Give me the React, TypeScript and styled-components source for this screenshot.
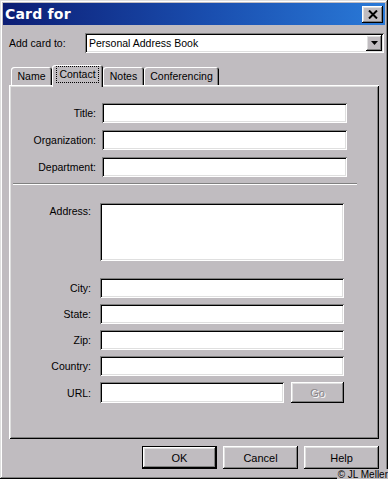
import styled, { createGlobalStyle, css } from 'styled-components';

const FACE = '#c0bcc0';

const raised = css`
  box-shadow:
    inset -1px -1px #000,
    inset 1px 1px #fff,
    inset -2px -2px #808080,
    inset 2px 2px #dfdfdf;
`;

const sunken = css`
  box-shadow:
    inset 1px 1px #808080,
    inset -1px -1px #fff,
    inset 2px 2px #000,
    inset -2px -2px #dfdfdf;
`;

const GlobalStyle = createGlobalStyle`
  html, body {
    margin: 0;
    padding: 0;
    background: ${FACE};
  }
`;

const Window = styled.div`
  position: relative;
  width: 388px;
  height: 479px;
  box-sizing: border-box;
  padding: 3px;
  background: ${FACE};
  box-shadow:
    inset -1px -1px #000,
    inset 1px 1px #dfdfdf,
    inset -2px -2px #808080,
    inset 2px 2px #fff;
  display: flex;
  flex-direction: column;
  font-family: 'Liberation Sans', Arial, sans-serif;
  font-size: 10.5px;
  color: #000;
`;

const TitleBar = styled.div`
  height: 22px;
  display: flex;
  align-items: center;
  justify-content: space-between;
  padding: 0 2px;
  background: linear-gradient(90deg, #0c1d74 0%, #1a4fb0 55%, #2a7ad8 100%);
`;

const TitleText = styled.span`
  font-family: 'DejaVu Sans', Verdana, sans-serif;
  font-weight: bold;
  font-size: 14px;
  color: #fff;
  letter-spacing: 0.2px;
`;

const CloseButton = styled.div`
  width: 21px;
  height: 17px;
  background: ${FACE};
  ${raised};
  display: flex;
  align-items: center;
  justify-content: center;
`;

const Content = styled.div`
  flex: 1;
  display: flex;
  flex-direction: column;
  padding: 0 6px;
`;

const AddRow = styled.div`
  margin-top: 8px;
  height: 20px;
  display: flex;
  align-items: center;
`;

const AddLabel = styled.span`
  width: 76px;
`;

const Select = styled.div`
  flex: 1;
  margin-right: -5px;
  height: 20px;
  box-sizing: border-box;
  padding: 2px;
  background: #fff;
  ${sunken};
  display: flex;
  align-items: center;
`;

const SelectValue = styled.span`
  flex: 1;
  padding-left: 2px;
`;

const ArrowButton = styled.div`
  width: 16px;
  height: 16px;
  background: ${FACE};
  ${raised};
  display: flex;
  align-items: center;
  justify-content: center;
`;

const TabStrip = styled.div`
  margin-top: 12px;
  height: 20px;
  padding-left: 2px;
  display: flex;
  align-items: flex-end;
`;

const Tab = styled.div<{ $width: number; $active?: boolean }>`
  position: relative;
  width: ${(p) => p.$width}px;
  height: ${(p) => (p.$active ? 22 : 18)}px;
  margin-bottom: ${(p) => (p.$active ? -2 : 0)}px;
  z-index: ${(p) => (p.$active ? 1 : 0)};
  box-sizing: border-box;
  padding-top: ${(p) => (p.$active ? 2 : 3)}px;
  background: ${FACE};
  border-radius: 3px 3px 0 0;
  box-shadow:
    inset 1px 1px #fff,
    inset -1px 0 #000,
    inset -2px 0 #808080;
  text-align: center;
  line-height: 13px;
`;

const FocusText = styled.span`
  display: inline-block;
  outline: 1px dotted #000;
  padding: 1px 2px;
`;

const Panel = styled.div`
  width: 370px;
  height: 354px;
  box-sizing: border-box;
  padding: 18px 0 0 2px;
  background: ${FACE};
  box-shadow:
    inset 1px 1px #fff,
    inset -1px -1px #000,
    inset 2px 2px #dfdfdf,
    inset -2px -2px #808080;
  display: flex;
  flex-direction: column;
`;

const Group = styled.div<{ $gap: number; $top?: number }>`
  display: flex;
  flex-direction: column;
  gap: ${(p) => p.$gap}px;
  margin-top: ${(p) => p.$top ?? 0}px;
`;

const Row = styled.div<{ $gap: number; $top?: boolean; $after?: number }>`
  display: flex;
  align-items: ${(p) => (p.$top ? 'flex-start' : 'center')};
  gap: ${(p) => p.$gap}px;
  margin-bottom: ${(p) => p.$after ?? 0}px;
`;

const Label = styled.span<{ $width: number; $top?: boolean }>`
  width: ${(p) => p.$width}px;
  text-align: right;
  padding-top: ${(p) => (p.$top ? 2 : 0)}px;
`;

const Field = styled.div<{ $width: number; $height?: number }>`
  width: ${(p) => p.$width}px;
  height: ${(p) => p.$height ?? 20}px;
  background: #fff;
  ${sunken};
`;

const Separator = styled.div`
  margin: 6px 0 0 2px;
  width: 344px;
  height: 0;
  border-top: 1px solid #808080;
  border-bottom: 1px solid #fff;
`;

const Button = styled.div<{ $width: number; $height: number; $default?: boolean; $disabled?: boolean }>`
  width: ${(p) => p.$width}px;
  height: ${(p) => p.$height}px;
  box-sizing: border-box;
  background: ${FACE};
  display: flex;
  align-items: center;
  justify-content: center;
  font-size: 11px;
  ${(p) =>
    p.$default
      ? css`
          border: 1px solid #000;
          box-shadow:
            inset -1px -1px #000,
            inset 1px 1px #fff,
            inset -2px -2px #808080,
            inset 2px 2px #dfdfdf;
        `
      : raised};
  ${(p) =>
    p.$disabled &&
    css`
      color: #8a868a;
      text-shadow: 1px 1px #fff;
    `}
`;

const Footer = styled.div`
  margin-top: 7px;
  display: flex;
  justify-content: flex-end;
  gap: 6px;
`;

const Credit = styled.span`
  position: absolute;
  right: 0;
  bottom: -1px;
  font-size: 10px;
  line-height: 11px;
  padding-left: 1px;
  background: ${FACE};
`;

const TABS = [
  { label: 'Name', width: 41 },
  { label: 'Contact', width: 51, active: true },
  { label: 'Notes', width: 41 },
  { label: 'Conferencing', width: 75 },
];

const TOP_FIELDS = ['Title:', 'Organization:', 'Department:'];
const ADDRESS_FIELDS = ['City:', 'State:', 'Zip:', 'Country:'];

export default function App() {
  return (
    <>
      <GlobalStyle />
      <Window>
        <TitleBar>
          <TitleText>Card for</TitleText>
          <CloseButton>
            <svg width="10" height="9" viewBox="0 0 10 9">
              <path d="M1 0.5 L9 8.5 M9 0.5 L1 8.5" stroke="#000" strokeWidth="2" />
            </svg>
          </CloseButton>
        </TitleBar>

        <Content>
          <AddRow>
            <AddLabel>Add card to:</AddLabel>
            <Select>
              <SelectValue>Personal Address Book</SelectValue>
              <ArrowButton>
                <svg width="7" height="4" viewBox="0 0 7 4">
                  <polygon points="0,0 7,0 3.5,4" fill="#000" />
                </svg>
              </ArrowButton>
            </Select>
          </AddRow>

          <TabStrip>
            {TABS.map((t) => (
              <Tab key={t.label} $width={t.width} $active={t.active}>
                {t.active ? <FocusText>{t.label}</FocusText> : t.label}
              </Tab>
            ))}
          </TabStrip>

          <Panel>
            <Group $gap={7}>
              {TOP_FIELDS.map((label) => (
                <Row key={label} $gap={6}>
                  <Label $width={85}>{label}</Label>
                  <Field $width={245} />
                </Row>
              ))}
            </Group>

            <Separator />

            <Group $gap={6} $top={18}>
              <Row $gap={9} $top $after={11}>
                <Label $width={80} $top>
                  Address:
                </Label>
                <Field $width={244} $height={58} />
              </Row>
              {ADDRESS_FIELDS.map((label) => (
                <Row key={label} $gap={9}>
                  <Label $width={80}>{label}</Label>
                  <Field $width={244} />
                </Row>
              ))}
              <Row $gap={9}>
                <Label $width={80}>URL:</Label>
                <Field $width={184} $height={21} />
                <Button $width={53} $height={21} $disabled style={{ marginLeft: -2 }}>
                  Go
                </Button>
              </Row>
            </Group>
          </Panel>

          <Footer>
            <Button $width={75} $height={23} $default>
              OK
            </Button>
            <Button $width={75} $height={23}>
              Cancel
            </Button>
            <Button $width={75} $height={23}>
              Help
            </Button>
          </Footer>
        </Content>

        <Credit>© JL Meller</Credit>
      </Window>
    </>
  );
}
